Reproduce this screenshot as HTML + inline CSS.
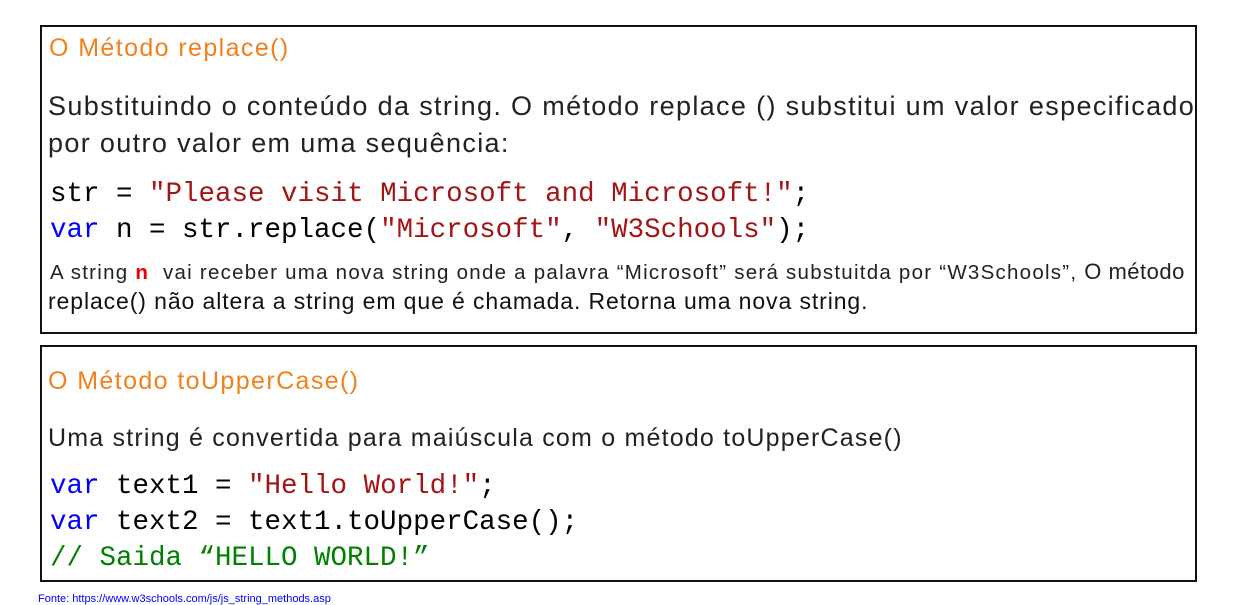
<!DOCTYPE html>
<html><head><meta charset="utf-8"><style>
body{margin:0;width:1245px;height:599px;background:#fff;position:relative;overflow:hidden;font-family:"Liberation Sans",sans-serif;}
.box{position:absolute;left:40px;width:1153px;border:2px solid #111;}
.t{position:absolute;white-space:nowrap;}
.o{color:#f0811d;font-size:25px;letter-spacing:1.4px;}
.b{color:#222;font-size:27px;letter-spacing:1.35px;}
.m{font-family:"Liberation Mono",monospace;font-size:27.5px;color:#000;}
.s{color:#a31515}.k{color:#0000ff}.g{color:#008000}
</style></head><body>
<div class="box" style="top:25px;height:305px"></div>
<div class="box" style="top:345px;height:233px"></div>
<div class="t o" style="left:49px;top:34px">O Método replace()</div>
<div class="t b" style="left:48px;top:91px">Substituindo o conteúdo da string. O método replace () substitui um valor especificado</div>
<div class="t b" style="left:48px;top:128px">por outro valor em uma sequência:</div>
<div class="t m" style="left:50px;top:179px">str = <span class="s">"Please visit Microsoft and Microsoft!"</span>;</div>
<div class="t m" style="left:50px;top:215px"><span class="k">var</span> n = str.replace(<span class="s">"Microsoft"</span>, <span class="s">"W3Schools"</span>);</div>
<div class="t" style="left:50px;top:259px;font-size:20.5px;letter-spacing:1.25px;color:#222">A string <b style="color:#e00">n</b>&nbsp; vai receber uma nova string onde a palavra “Microsoft” será substuitda por “W3Schools”, <span style="font-size:22px;letter-spacing:0.5px">O método</span></div>
<div class="t" style="left:48px;top:288px;font-size:23px;letter-spacing:0.9px;color:#111">replace() não altera a string em que é chamada. Retorna uma nova string.</div>
<div class="t o" style="left:48px;top:367px">O Método toUpperCase()</div>
<div class="t" style="left:48px;top:424px;font-size:25px;letter-spacing:1.2px;color:#222">Uma string é convertida para maiúscula com o método toUpperCase()</div>
<div class="t m" style="left:50px;top:471px"><span class="k">var</span> text1 = <span class="s">"Hello World!"</span>;</div>
<div class="t m" style="left:50px;top:507px"><span class="k">var</span> text2 = text1.toUpperCase();</div>
<div class="t m g" style="left:50px;top:543px">// Saida “HELLO WORLD!”</div>
<div class="t" style="left:38px;top:593px;font-size:11px;color:#00f">Fonte: https://www.w3schools.com/js/js_string_methods.asp</div>
</body></html>
